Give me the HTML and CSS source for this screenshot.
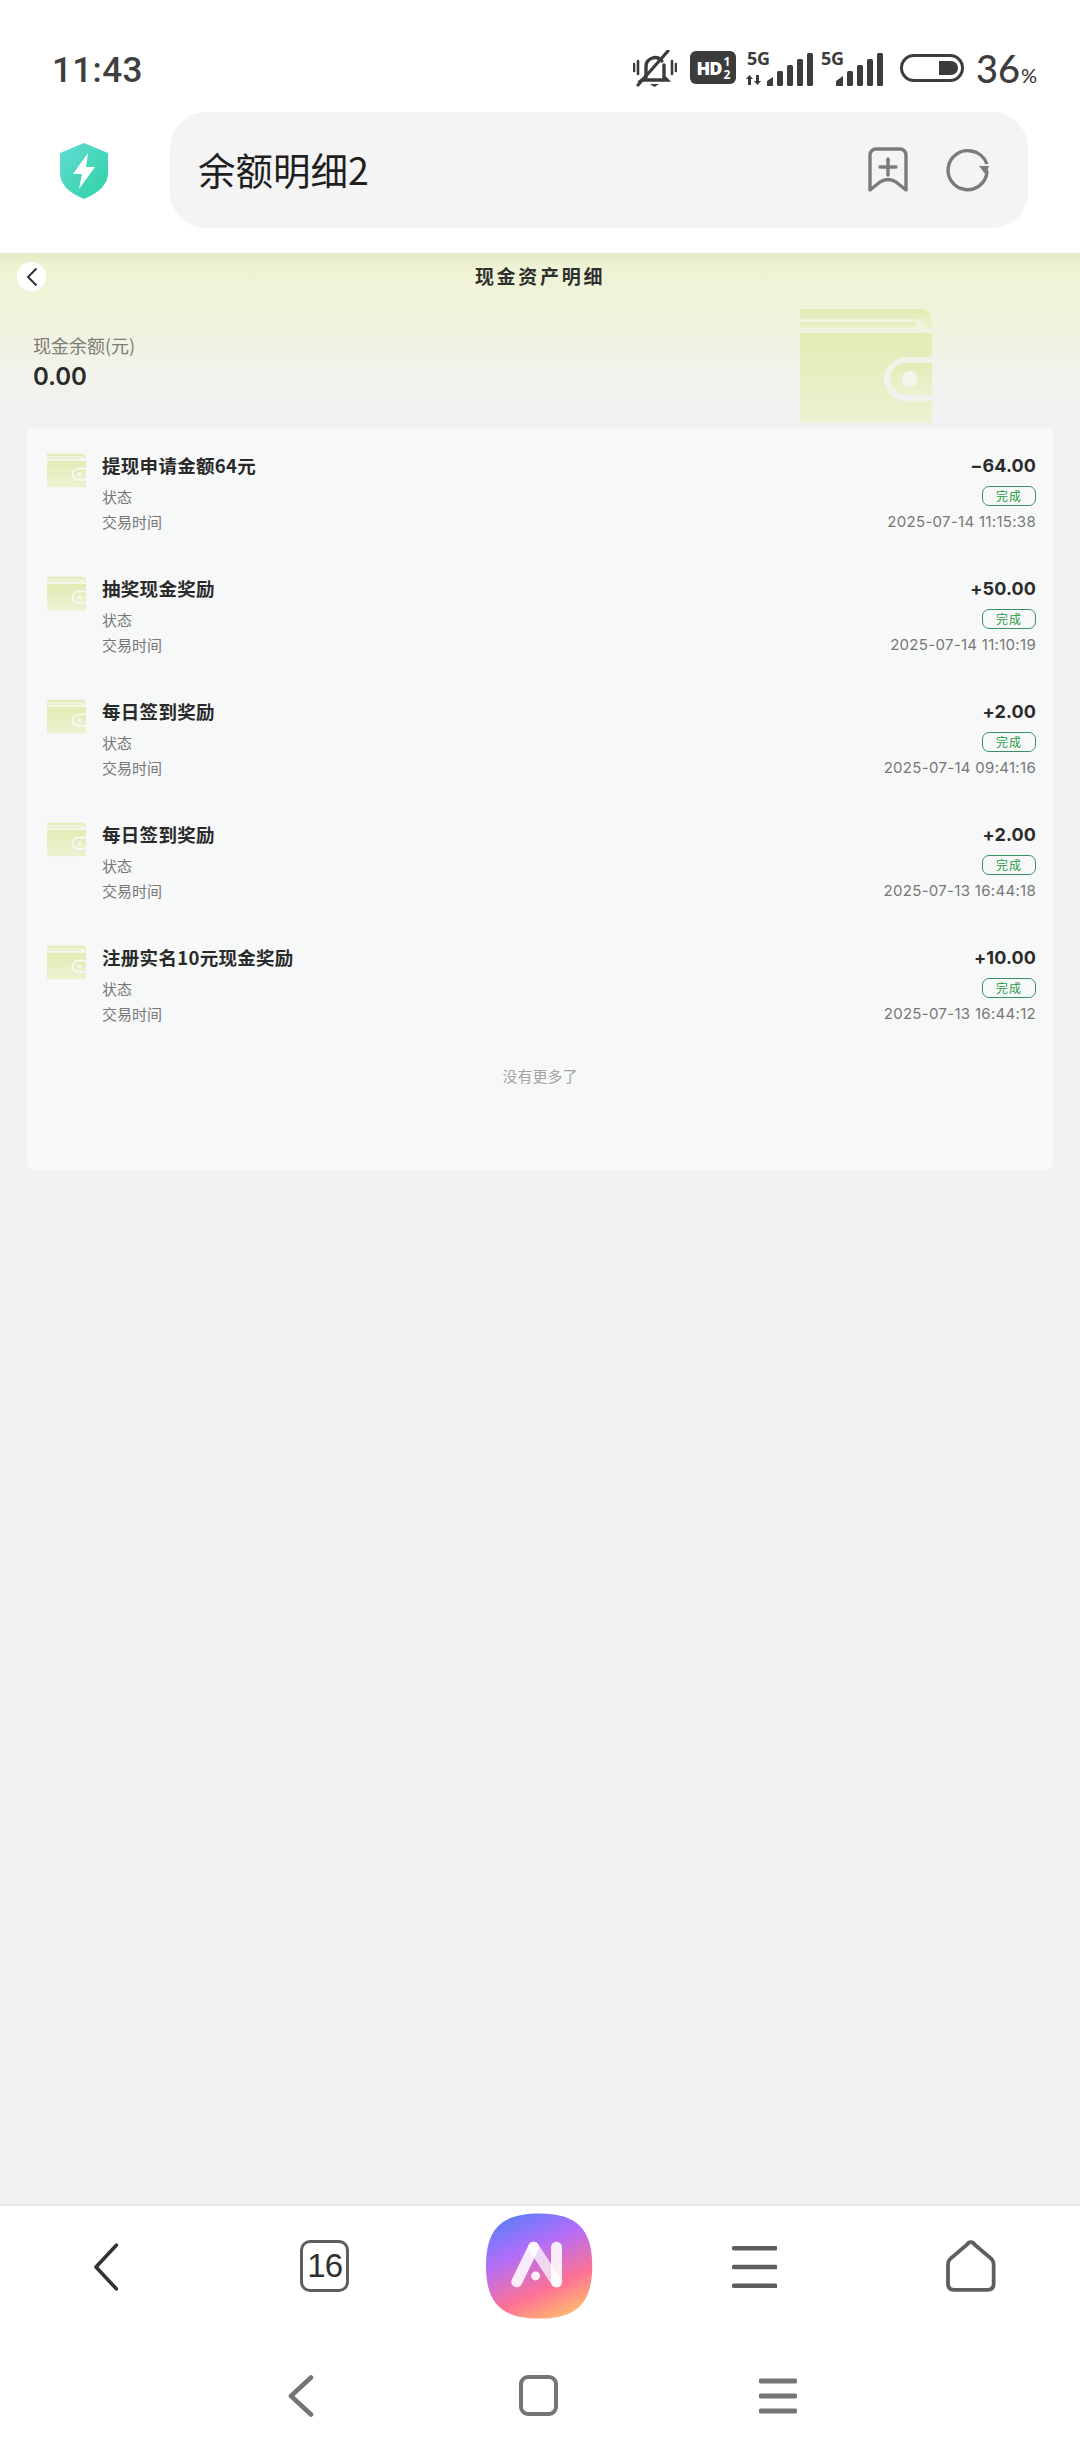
FILE: index.html
```html
<!DOCTYPE html>
<html lang="zh-CN">
<head>
<meta charset="utf-8">
<title>余额明细2</title>
<link rel="stylesheet" href="styles.css">
</head>
<body>
<svg class="defs" width="0" height="0" aria-hidden="true">
  <defs>
    <linearGradient id="wg" x1="0" y1="0" x2="0" y2="1">
      <stop offset="0" stop-color="#e2ecb4"/>
      <stop offset="1" stop-color="#edf1d2"/>
    </linearGradient>
    <linearGradient id="logoG" x1="0.25" y1="0" x2="0.7" y2="1">
      <stop offset="0" stop-color="#5f7dfb"/>
      <stop offset="0.35" stop-color="#b56df7"/>
      <stop offset="0.72" stop-color="#fd7294"/>
      <stop offset="1" stop-color="#ffb870"/>
    </linearGradient>
    <linearGradient id="shieldG" x1="0" y1="0" x2="1" y2="1">
      <stop offset="0" stop-color="#62dcd4"/>
      <stop offset="1" stop-color="#2fd1a4"/>
    </linearGradient>
    <symbol id="wallet" viewBox="0 0 132 114">
      <path fill="url(#wg)" d="M0 0H120Q132 0 132 14V20H124V17Q124 10 116 10H0Z"/>
      <rect fill="url(#wg)" x="0" y="13" width="116" height="6" rx="1"/>
      <path fill="url(#wg)" d="M0 24H132V48H106A22 22 0 0 0 106 92H132V114H0Z"/>
      <path fill="url(#wg)" d="M132 54H106A16 16 0 0 0 106 86H132Z"/>
      <circle cx="110" cy="70" r="8" fill="#f4f5ea"/>
    </symbol>
  </defs>
</svg>

<header class="status">
  <span class="clock">11:43</span>
  <div class="status-icons">
    <svg class="ic-bell" viewBox="0 0 44 37"><g fill="none" stroke="#3c3c3c" stroke-width="3.400" stroke-linecap="round"><path d="M13 27V17a9 9 0 0 1 16-6M31 15v12l3 3H9l4-3"/><path d="M35 1 L5 35" stroke-width="3.200"/><path d="M1 14v7M5 11v13M39 11v13M43 14v7" stroke-width="2.600"/></g><path d="M17 34h9l-4.500 3z" fill="#3c3c3c"/></svg>
    <span class="hd"><b>HD</b><span class="hd-frac"><i>1</i><i>2</i></span></span>
    <span class="sig sig-a">
      <span class="five-g">5G</span>
      <svg viewBox="0 0 69 33"><g fill="#3c3c3c"><path d="M0 26l3.500-4 3.500 4H5v6H2v-6zM8 28l3.500 4 3.500-4h-2v-6h-3v6z"/><path d="M21 33v-5l6-4v9z"/><rect x="31" y="18" width="6" height="15" rx="1.500"/><rect x="41" y="12" width="6" height="21" rx="1.500"/><rect x="51" y="6" width="6" height="27" rx="1.500"/><rect x="61" y="0" width="6" height="33" rx="1.500"/></g></svg>
    </span>
    <span class="sig sig-b">
      <span class="five-g">5G</span>
      <svg viewBox="0 0 48 33"><g fill="#3c3c3c"><path d="M0 33v-5l7-5v10z"/><rect x="11" y="18" width="6" height="15" rx="1.500"/><rect x="21" y="12" width="6" height="21" rx="1.500"/><rect x="31" y="6" width="6" height="27" rx="1.500"/><rect x="41" y="0" width="6" height="33" rx="1.500"/></g></svg>
    </span>
    <svg class="ic-batt" viewBox="0 0 64 28"><rect x="1.500" y="1.500" width="61" height="25" rx="12.500" fill="none" stroke="#3c3c3c" stroke-width="3"/><path d="M39 7h12a7 7 0 0 1 0 14H39z" fill="#3c3c3c"/></svg>
    <span class="pct">36<small>%</small></span>
  </div>
</header>

<div class="browser-bar">
  <svg class="ic-shield" viewBox="0 0 48 56"><path d="M24 0 L48 10V30Q48 46 24 56Q0 46 0 30V10Z" fill="url(#shieldG)"/><path d="M28 10 L13 31H22L19 46 L35 24H26Z" fill="#fff"/></svg>
  <div class="address">
    <span class="address-text">余额明细2</span>
    <svg class="ic-mark" viewBox="0 0 40 46"><path d="M8 2h24a6 6 0 0 1 6 6v35L28 35q-8-5-16 0L2 43V8a6 6 0 0 1 6-6z" fill="none" stroke="#7b7b7b" stroke-width="3.400" stroke-linejoin="round"/><path d="M20 12v16M12 20h16" stroke="#7b7b7b" stroke-width="3.400" stroke-linecap="round"/></svg>
    <svg class="ic-reload" viewBox="0 0 44 44"><path d="M25 3A19.500 19.500 0 1 0 41 24" fill="none" stroke="#7b7b7b" stroke-width="3.400" stroke-linecap="round"/><path d="M25 3A19.500 19.500 0 0 1 41 16" fill="none" stroke="#7b7b7b" stroke-width="3.400"/><path d="M33 18h10l-3 9z" fill="#7b7b7b"/></svg>
  </div>
</div>

<main class="page">
  <section class="hero">
    <svg class="hero-wallet"><use href="#wallet"/></svg>
    <div class="nav-head">
      <span class="back-dot"><svg viewBox="0 0 12 20"><path d="M10.500 1.500 2 10l8.500 8.500" fill="none" stroke="#333" stroke-width="2"/></svg></span>
      <h1 class="title">现金资产明细</h1>
    </div>
    <div class="balance-label">现金余额(元)</div>
    <div class="balance-value">0.00</div>
  </section>

  <section class="card">
    <article class="row">
      <svg class="row-wallet"><use href="#wallet"/></svg>
      <div class="row-body">
        <div class="line line-title"><span class="row-title">提现申请金额64元</span><span class="amount">−64.00</span></div>
        <div class="line"><span class="meta">状态</span><span class="badge">完成</span></div>
        <div class="line line-time"><span class="meta">交易时间</span><span class="meta date">2025-07-14 11:15:38</span></div>
      </div>
    </article>
    <article class="row">
      <svg class="row-wallet"><use href="#wallet"/></svg>
      <div class="row-body">
        <div class="line line-title"><span class="row-title">抽奖现金奖励</span><span class="amount">+50.00</span></div>
        <div class="line"><span class="meta">状态</span><span class="badge">完成</span></div>
        <div class="line line-time"><span class="meta">交易时间</span><span class="meta date">2025-07-14 11:10:19</span></div>
      </div>
    </article>
    <article class="row">
      <svg class="row-wallet"><use href="#wallet"/></svg>
      <div class="row-body">
        <div class="line line-title"><span class="row-title">每日签到奖励</span><span class="amount">+2.00</span></div>
        <div class="line"><span class="meta">状态</span><span class="badge">完成</span></div>
        <div class="line line-time"><span class="meta">交易时间</span><span class="meta date">2025-07-14 09:41:16</span></div>
      </div>
    </article>
    <article class="row">
      <svg class="row-wallet"><use href="#wallet"/></svg>
      <div class="row-body">
        <div class="line line-title"><span class="row-title">每日签到奖励</span><span class="amount">+2.00</span></div>
        <div class="line"><span class="meta">状态</span><span class="badge">完成</span></div>
        <div class="line line-time"><span class="meta">交易时间</span><span class="meta date">2025-07-13 16:44:18</span></div>
      </div>
    </article>
    <article class="row">
      <svg class="row-wallet"><use href="#wallet"/></svg>
      <div class="row-body">
        <div class="line line-title"><span class="row-title">注册实名10元现金奖励</span><span class="amount">+10.00</span></div>
        <div class="line"><span class="meta">状态</span><span class="badge">完成</span></div>
        <div class="line line-time"><span class="meta">交易时间</span><span class="meta date">2025-07-13 16:44:12</span></div>
      </div>
    </article>
    <div class="no-more">没有更多了</div>
  </section>
</main>

<nav class="toolbar">
  <svg class="tb-back" viewBox="0 0 26 48"><path d="M23.500 2 3 24l20.500 22" fill="none" stroke="#333" stroke-width="3.600" stroke-linecap="round" stroke-linejoin="round"/></svg>
  <span class="tb-tabs">16</span>
  <svg class="tb-logo" viewBox="0 0 107 106"><path d="M53.500 0C92 0 107 16 107 53S92 106 53.500 106 0 90 0 53 15 0 53.500 0Z" fill="url(#logoG)"/><g fill="none" stroke="#fff" stroke-width="11" stroke-linecap="round" stroke-linejoin="round"><path d="M31 69 48 34" stroke-opacity=".88"/><path d="M48 34 71 69" stroke-opacity=".72"/><path d="M71 34V69" stroke-opacity=".88"/></g><circle cx="50" cy="63" r="4.500" fill="#fff" fill-opacity=".9"/></svg>
  <svg class="tb-menu" viewBox="0 0 46 44"><path d="M2 3H44M2 22H44M2 41H44" stroke="#5e5e5e" stroke-width="4.500" stroke-linecap="round"/></svg>
  <svg class="tb-home" viewBox="0 0 50 52"><path d="M25 2 Q22.500 2 21 4.500L4 19Q2 21 2 25V44Q2 50 8 50H42Q48 50 48 44V25Q48 21 46 19L29 4.500Q27.500 2 25 2Z" fill="none" stroke="#5e5e5e" stroke-width="3.800"/></svg>
</nav>

<nav class="sysnav">
  <svg class="sn-back" viewBox="0 0 26 42"><path d="M23 2.500 3 21l20 18.500" fill="none" stroke="#757575" stroke-width="4.600" stroke-linecap="round" stroke-linejoin="round"/></svg>
  <span class="sn-home"></span>
  <svg class="sn-menu" viewBox="0 0 38 36"><path d="M2 3H36M2 18H36M2 33H36" stroke="#757575" stroke-width="5" stroke-linecap="round"/></svg>
</nav>
</body>
</html>
```

FILE: styles.css
```css
* { box-sizing: border-box; }
html, body { margin: 0; padding: 0; }
body {
  width: 1080px;
  height: 2460px;
  display: flex;
  flex-direction: column;
  background: #fff;
  font-family: Inter, "Noto Sans CJK SC", sans-serif;
  color: #2b2b2b;
  overflow: hidden;
}
.defs { position: absolute; }

/* status bar */
.status {
  height: 112px;
  flex: none;
  padding: 48px 0 0 52px;
  display: flex;
  justify-content: space-between;
  align-items: flex-start;
}
.clock {
  margin-top: 3px;
  font: 500 35px/40px Roboto, sans-serif;
  letter-spacing: .4px;
  color: #3f3f3f;
}
.status-icons { display: flex; align-items: flex-start; }
.ic-bell { width: 44px; height: 37px; margin-top: 2px; }
.hd {
  width: 46px;
  height: 33px;
  margin: 3px 0 0 13px;
  border-radius: 6px;
  background: #3c3c3c;
  color: #fff;
  display: flex;
  align-items: center;
  justify-content: center;
  font: 700 18px/1 "Open Sans", sans-serif;
  letter-spacing: -1px;
}
.hd-frac { display: flex; flex-direction: column; margin-left: 2px; }
.hd-frac i { font: 700 12px/13px "Open Sans", sans-serif; font-style: normal; }
.sig { position: relative; display: block; height: 36px; margin-top: 0; }
.sig svg { display: block; height: 33px; position: absolute; right: 0; bottom: -2px; }
.five-g {
  position: absolute;
  top: 1px;
  font: 700 18px/18px "Open Sans", sans-serif;
  color: #3c3c3c;
  letter-spacing: -.3px;
}
.sig-a { width: 69px; margin-left: 10px; }
.sig-a svg { width: 69px; }
.sig-a .five-g { left: 1px; }
.sig-b { width: 63px; margin-left: 6px; }
.sig-b svg { width: 48px; }
.sig-b .five-g { left: 0; }
.ic-batt { width: 64px; height: 28px; margin: 6px 0 0 16px; }
.pct {
  margin: -3px 0 0 12px;
  font: 500 38px/46px Lato, sans-serif;
  color: #3c3c3c;
  width: 104px;
  padding-right: 45px;
  white-space: nowrap;
}
.pct small { font-size: 20px; margin-left: 1px; }

/* browser address row */
.browser-bar {
  height: 141px;
  flex: none;
  padding: 0 52px 25px 60px;
  display: flex;
  align-items: flex-start;
  background: #fff;
}
.ic-shield { width: 48px; height: 56px; margin: 31px 62px 0 0; flex: none; }
.address {
  flex: 1;
  height: 116px;
  border-radius: 36px;
  background: #f4f4f4;
  display: flex;
  align-items: center;
  padding: 0 38px 0 28px;
}
.address-text {
  flex: 1;
  margin-top: -2px;
  font: 400 37.500px/1 "Noto Sans CJK SC", sans-serif;
  color: #1f1f1f;
}
.ic-mark { width: 40px; height: 46px; margin-right: 38px; }
.ic-reload { width: 44px; height: 44px; }

/* page */
.page {
  flex: 1;
  min-height: 0;
  background: #f1f3f2;
}
.hero {
  position: relative;
  height: 175px;
  padding-left: 33px;
  background: linear-gradient(180deg, #e5e9c6 0, #eff3d5 14px, #f0f3d8 50px, #f1f2ec 125px, #f1f2f2 175px);
}
.hero-wallet {
  position: absolute;
  left: 800px;
  top: 56px;
  width: 132px;
  height: 114px;
}
.nav-head {
  position: relative;
  height: 46px;
  margin-left: -16px;
  display: flex;
  align-items: center;
  justify-content: center;
}
.back-dot {
  position: absolute;
  left: 0;
  top: 9px;
  width: 29px;
  height: 29px;
  border-radius: 50%;
  background: #fff;
  display: flex;
  align-items: center;
  justify-content: center;
}
.back-dot svg { width: 12px; height: 20px; }
.title {
  margin: 0 0 0 -17px;
  font: 700 19px/46px "Noto Sans CJK SC", sans-serif;
  letter-spacing: 2.7px;
  color: #2f2f2f;
}
.balance-label {
  position: relative;
  margin-top: 34px;
  font: 400 18px/24px "Noto Sans CJK SC", sans-serif;
  color: #7d7d75;
}
.balance-value {
  position: relative;
  margin-top: 5px;
  font: 600 24px/30px Inter, sans-serif;
  color: #2a2a2a;
}

/* list card */
.card {
  margin: 0 27px;
  height: 742px;
  padding: 24px 17px 0 20px;
  border-radius: 6px;
  background: #f7f9f9;
}
.row {
  height: 123px;
  display: flex;
  gap: 16px;
  align-items: flex-start;
}
.row-wallet { width: 39px; height: 35px; margin-top: 1px; flex: none; }
.row-body { flex: 1; min-width: 0; }
.line {
  height: 26px;
  display: flex;
  justify-content: space-between;
  align-items: center;
}
.line-title { height: 28px; margin-bottom: 4px; }
.line-time { margin-top: -1px; }
.row-title {
  margin-top: -2px;
  font: 700 18.500px/28px "Noto Sans CJK SC", sans-serif;
  letter-spacing: .3px;
  color: #2a2a2a;
}
.amount {
  font: 700 18px/28px Inter, sans-serif;
  color: #2b2b2b;
  letter-spacing: .1px;
}
.meta {
  margin-top: -1px;
  font: 400 15px/26px "Noto Sans CJK SC", sans-serif;
  color: #777;
}
.date { font-family: Inter, sans-serif; letter-spacing: .3px; }
.badge {
  width: 54px;
  height: 20px;
  margin-top: -2px;
  border: 1px solid #3a8f62;
  border-radius: 7px;
  font: 400 12px/18px "Noto Sans CJK SC", sans-serif;
  color: #1f9a45;
  text-align: center;
  letter-spacing: 1px;
}
.no-more {
  margin-top: -1px;
  text-align: center;
  font: 400 15px/20px "Noto Sans CJK SC", sans-serif;
  color: #a3a5a5;
  margin-left: -3px;
}

/* bottom toolbar */
.toolbar {
  height: 136px;
  flex: none;
  border-top: 2px solid #e7e9e9;
  background: #fff;
  display: flex;
  align-items: flex-start;
  padding: 0 84px 0 93px;
}
.tb-back { width: 26px; height: 48px; margin: 37px 181px 0 0; }
.tb-tabs {
  width: 50px;
  height: 52px;
  margin: 34px 137px 0 0;
  border: 3.5px solid #5e5e5e;
  border-radius: 10px;
  font: 400 33px/45px "Liberation Sans", sans-serif;
  letter-spacing: -1px;
  text-align: center;
  color: #2f2f2f;
}
.tb-logo { width: 107px; height: 106px; margin: 7px 139px 0 0; }
.tb-menu { width: 46px; height: 44px; margin: 39px 169px 0 0; }
.tb-home { width: 50px; height: 52px; margin: 34px 0 0 0; }

.sysnav {
  flex: none;
  height: 120px;
  display: flex;
  align-items: flex-start;
  padding: 35px 0 0 288px;
  background: #fff;
}
.sn-back { width: 26px; height: 42px; margin-right: 205px; }
.sn-home {
  width: 39px;
  height: 41px;
  border: 4.5px solid #757575;
  border-radius: 9px;
  margin-right: 201px;
}
.sn-menu { width: 38px; height: 36px; margin-top: 3px; }
```
